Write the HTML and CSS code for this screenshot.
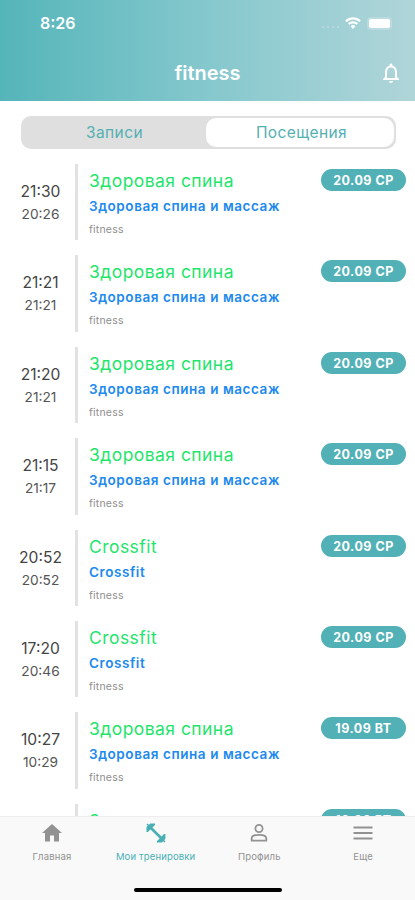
FILE: index.html
```html
<!DOCTYPE html>
<html lang="ru">
<head>
    <meta charset="UTF-8" />
    <meta name="viewport" content="width=device-width, initial-scale=1" />
    <title>fitness</title>
    <link rel="stylesheet" href="styles.css">
</head>
<body>

    <header>
        <div class="status-bar">
            <span class="clock">8:26</span>
            <div class="status-icons">
                <span class="signal"><i></i><i></i><i></i><i></i></span>
                <svg class="wifi" width="16" height="12" viewBox="0 0 16 12" fill="none" stroke="#fff" stroke-width="2.1">
                    <path d="M.9 4.2a10.3 10.3 0 0 1 14.2 0" />
                    <path d="M3.6 7.1a6.4 6.4 0 0 1 8.8 0" />
                    <path d="M5.5 9.2a3.7 3.7 0 0 1 5 0L8 11.9z" fill="#fff" stroke="none" />
                </svg>
                <span class="battery"></span>
            </div>
        </div>
        <div class="title-bar">
            <h1>fitness</h1>
            <svg class="bell" width="24" height="24" viewBox="0 0 24 24" fill="#fff">
                <path d="M12 22c1.1 0 2-.9 2-2h-4c0 1.1.9 2 2 2zm6-6v-5c0-3.07-1.63-5.64-4.5-6.32V4c0-.83-.67-1.5-1.5-1.5s-1.5.67-1.5 1.5v.68C7.64 5.36 6 7.92 6 11v5l-2 2v1h16v-1l-2-2zm-2 1H8v-6c0-2.48 1.51-4.5 4-4.5s4 2.02 4 4.5v6z" />
            </svg>
        </div>
    </header>

    <div class="tabs">
        <button type="button">Записи</button>
        <button type="button" class="active">Посещения</button>
    </div>

    <main class="visits">
        <div class="visit">
            <div class="time"><span>21:30</span><small>20:26</small></div>
            <div class="info">
                <h2>Здоровая спина</h2>
                <h3>Здоровая спина и массаж</h3>
                <p>fitness</p>
            </div>
            <span class="date">20.09 СР</span>
        </div>
        <div class="visit">
            <div class="time"><span>21:21</span><small>21:21</small></div>
            <div class="info">
                <h2>Здоровая спина</h2>
                <h3>Здоровая спина и массаж</h3>
                <p>fitness</p>
            </div>
            <span class="date">20.09 СР</span>
        </div>
        <div class="visit">
            <div class="time"><span>21:20</span><small>21:21</small></div>
            <div class="info">
                <h2>Здоровая спина</h2>
                <h3>Здоровая спина и массаж</h3>
                <p>fitness</p>
            </div>
            <span class="date">20.09 СР</span>
        </div>
        <div class="visit">
            <div class="time"><span>21:15</span><small>21:17</small></div>
            <div class="info">
                <h2>Здоровая спина</h2>
                <h3>Здоровая спина и массаж</h3>
                <p>fitness</p>
            </div>
            <span class="date">20.09 СР</span>
        </div>
        <div class="visit">
            <div class="time"><span>20:52</span><small>20:52</small></div>
            <div class="info">
                <h2>Crossfit</h2>
                <h3>Crossfit</h3>
                <p>fitness</p>
            </div>
            <span class="date">20.09 СР</span>
        </div>
        <div class="visit">
            <div class="time"><span>17:20</span><small>20:46</small></div>
            <div class="info">
                <h2>Crossfit</h2>
                <h3>Crossfit</h3>
                <p>fitness</p>
            </div>
            <span class="date">20.09 СР</span>
        </div>
        <div class="visit">
            <div class="time"><span>10:27</span><small>10:29</small></div>
            <div class="info">
                <h2>Здоровая спина</h2>
                <h3>Здоровая спина и массаж</h3>
                <p>fitness</p>
            </div>
            <span class="date">19.09 ВТ</span>
        </div>
        <div class="visit">
            <div class="time"></div>
            <div class="info">
                <h2>Здоровая спина</h2>
            </div>
            <span class="date">19.09 ВТ</span>
        </div>
    </main>

    <footer>
        <nav>
            <a href="#">
                <svg width="24" height="24" viewBox="0 0 24 24" fill="currentColor">
                    <path d="M10 20.5v-6h4v6h5V12h3L12 3 2 12h3v8.5z" />
                </svg>
                Главная
            </a>
            <a href="#" class="active">
                <svg width="24" height="24" viewBox="0 0 24 24" fill="currentColor">
                    <path d="M2.500 3.500l1-1 1.300 1.200 1.400-1.200h4.800v1.400L8.400 6.500l9.100 9.100 2.500-2.600h1.400v4.800l-1.200 1.400 1.300 1.300-1 1-1.300-1.300-1.400 1.300H13v-1.500l2.700-2.500-9.200-9.100L3.900 10.900H2.500V6l1.200-1.200z" />
                </svg>
                Мои тренировки
            </a>
            <a href="#">
                <svg width="24" height="24" viewBox="0 0 24 24" fill="none" stroke="currentColor" stroke-width="1.8">
                    <circle cx="12" cy="7.5" r="3.6" />
                    <path d="M4.7 19.6v-2.3c0-2.2 3.4-3.5 7.3-3.5s7.3 1.3 7.3 3.5v2.3z" />
                </svg>
                Профиль
            </a>
            <a href="#">
                <svg width="24" height="24" viewBox="0 0 24 24" stroke="currentColor" stroke-width="2">
                    <path d="M2.5 6.5h19M2.5 12h19M2.5 17.5h19" />
                </svg>
                Еще
            </a>
        </nav>
        <div class="home-indicator"></div>
    </footer>

</body>
</html>
```

FILE: styles.css
```css
* {
    box-sizing: border-box;
}

body {
    font-family: Inter, "Liberation Sans", sans-serif;
    background: #fff;
    margin: 0;
    height: 900px;
    display: flex;
    flex-direction: column;
    overflow: hidden;
}

h1, h2, h3, p {
    margin: 0;
}

header {
    height: 101px;
    flex: none;
    background: linear-gradient(90deg, #54b5b9, #85c8cd 50%, #b0d5d9);
    color: #fff;
}

.status-bar {
    height: 46px;
    padding: 0 22px 0 40px;
    display: flex;
    align-items: center;
    justify-content: space-between;
}

.clock {
    font-size: 16px;
    font-weight: 600;
}

.status-icons {
    display: flex;
    align-items: center;
}

.signal {
    display: flex;
    gap: 3px;
    padding-top: 8px;
    margin-right: 6px;
}

    .signal i {
        width: 2px;
        height: 2px;
        border-radius: 1px;
        background: rgba(255, 255, 255, 0.3);
    }

.battery {
    width: 21px;
    height: 9px;
    margin: 0 3px 0 8px;
    border-radius: 2px;
    background: #fff;
    box-shadow: 0 0 0 2px rgba(255, 255, 255, 0.2);
}

.title-bar {
    height: 54px;
    padding: 0 12px 0 36px;
    display: grid;
    grid-template-columns: 1fr 24px;
    align-items: center;
    text-align: center;
}

h1 {
    font-size: 20px;
    font-weight: 600;
}

.tabs {
    flex: none;
    height: 33px;
    margin: 15px 19px 15px 21px;
    padding: 2px;
    display: flex;
    border-radius: 10px;
    background: #dfdfdf;
}

    .tabs button {
        flex: 1;
        padding: 0;
        border: none;
        border-radius: 10px;
        background: none;
        color: #54b0b2;
        font: 400 15.5px Inter, sans-serif;
        letter-spacing: 0.4px;
    }

    .tabs .active {
        flex: 0 0 188px;
        padding-left: 3px;
        background: #fff;
    }

.visits {
    flex: 1;
    min-height: 0;
    display: flex;
    flex-direction: column;
    gap: 15px;
    overflow: hidden;
}

.visit {
    flex: none;
    height: 76.4px;
    padding-right: 9px;
    display: flex;
    align-items: flex-start;
}

.time {
    width: 78px;
    height: 100%;
    padding: 17px 0 0 6px;
    border-right: 3px solid #e2e2e2;
    text-align: center;
    color: #444;
}

    .time span,
    .time small {
        display: block;
        font-size: 15.6px;
        line-height: 22px;
    }

    .time small {
        font-size: 13.7px;
        color: #555;
    }

.info {
    flex: 1;
    padding: 5px 0 0 11px;
    white-space: nowrap;
}

h2 {
    font-size: 17.5px;
    font-weight: 400;
    line-height: 24px;
    letter-spacing: 0.45px;
    color: #1fe56c;
}

h3 {
    font-size: 13.5px;
    font-weight: 600;
    line-height: 26px;
    letter-spacing: 0.57px;
    color: #2089ed;
}

.info p {
    font-size: 10.5px;
    line-height: 21px;
    letter-spacing: 0.2px;
    color: #8e8e8e;
}

.date {
    width: 85px;
    height: 22px;
    margin-top: 5px;
    border-radius: 11px;
    background: #52b1b6;
    color: #fff;
    font-size: 12.5px;
    font-weight: 700;
    line-height: 23px;
    letter-spacing: 0.5px;
    text-align: center;
}

footer {
    flex: none;
    height: 84px;
    border-top: 1px solid #ededed;
    background: #f9f9f9;
}

nav {
    height: 71px;
    padding-top: 4px;
    display: grid;
    grid-template-columns: repeat(4, 1fr);
}

    nav a {
        display: flex;
        flex-direction: column;
        align-items: center;
        gap: 5px;
        color: #929292;
        font-size: 9.5px;
        line-height: 13px;
        letter-spacing: 0.15px;
        text-decoration: none;
        white-space: nowrap;
    }

    nav .active {
        color: #48b0b5;
    }

.home-indicator {
    width: 148px;
    height: 4px;
    margin: 0 auto;
    border-radius: 2px;
    background: #000;
}
```
